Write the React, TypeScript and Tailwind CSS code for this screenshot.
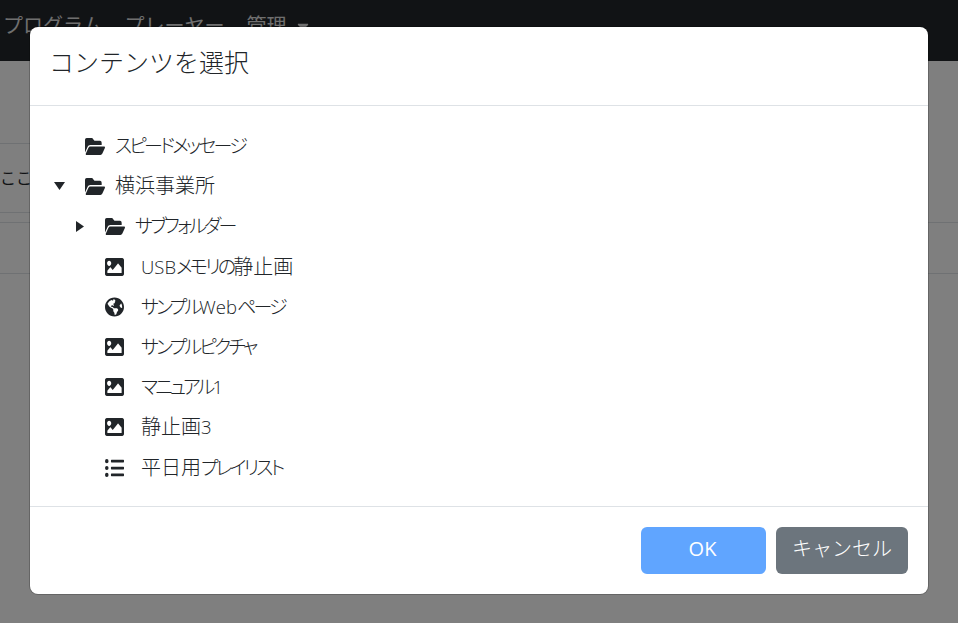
import { FaGlobeAmericas, FaListUl, FaCaretDown } from 'react-icons/fa';
import type { ReactNode } from 'react';

const jp = '[font-family:"Open_Sans","Noto_Sans_CJK_JP",sans-serif]';

// FA5 の形を縦に少し伸ばして使う
function FolderIcon() {
  return (
    <svg viewBox="0 64 576 384" preserveAspectRatio="none" className="h-[17px] w-[20px]" fill="currentColor">
      <path d="M572.694 292.093L500.27 416.248A63.997 63.997 0 0 1 444.989 448H45.025c-18.523 0-30.064-20.093-20.731-36.093l72.424-124.155A64 64 0 0 1 152 256h399.964c18.523 0 30.064 20.093 20.73 36.093zM152 224h328v-48c0-26.51-21.49-48-48-48H272l-64-64H48C21.49 64 0 85.49 0 112v278.046l69.077-118.418C86.214 242.25 117.989 224 152 224z" />
    </svg>
  );
}

function ImageIcon() {
  return (
    <svg viewBox="0 64 512 384" preserveAspectRatio="none" className="h-[18px] w-[19px]" fill="currentColor">
      <path d="M464 448H48c-26.51 0-48-21.49-48-48V112c0-26.51 21.49-48 48-48h416c26.51 0 48 21.49 48 48v288c0 26.51-21.49 48-48 48zM112 120c-30.928 0-56 25.072-56 56s25.072 56 56 56 56-25.072 56-56-25.072-56-56-56zM64 384h384V272l-87.515-87.515c-4.686-4.686-12.284-4.686-16.971 0L208 320l-55.515-55.515c-4.686-4.686-12.284-4.686-16.971 0L64 336v48z" />
    </svg>
  );
}

function CaretDown() {
  return (
    <svg viewBox="0 0 11 8" className="h-[8px] w-[11px] -translate-x-[1px]" fill="currentColor">
      <path d="M0 0h11L5.5 8z" />
    </svg>
  );
}

function CaretRight() {
  return (
    <svg viewBox="0 0 8 11" className="h-[11px] w-[8px]" fill="currentColor">
      <path d="M0 0l8 5.5L0 11z" />
    </svg>
  );
}

// かなは詰めて、漢字はそのままの幅で出す
function Label({ text }: { text: string }) {
  const parts = text.match(/[\u3040-\u30ff]+|[A-Za-z0-9]+|[^\u3040-\u30ffA-Za-z0-9]+/g) ?? [];
  return (
    <>
      {parts.map((part, i) => {
        if (/[\u3040-\u30ff]/.test(part)) {
          return (
            <span key={i} className="text-[19px] tracking-[-2.8px] [font-feature-settings:'palt']">
              {part}
            </span>
          );
        }
        if (/[A-Za-z0-9]/.test(part)) {
          return (
            <span key={i} className="text-[18.5px]">
              {part}
            </span>
          );
        }
        return <span key={i}>{part}</span>;
      })}
    </>
  );
}

type RowProps = {
  icon: ReactNode;
  label: string;
  depth?: number;
  caret?: 'down' | 'right';
  folder?: boolean;
};

function TreeRow({ icon, label, depth = 0, caret, folder }: RowProps) {
  return (
    <li className={`flex h-[40.2px] items-center ${depth === 1 ? 'pl-[20px]' : ''}`}>
      <span className="flex w-[35px] justify-center pr-[15px] text-[#212529]">
        {caret === 'down' && <CaretDown />}
        {caret === 'right' && <CaretRight />}
      </span>
      <span className="flex w-[20px] justify-start text-[20px] text-[#212529]">{icon}</span>
      <span className={`${folder ? 'ml-[10px]' : 'ml-[16px]'} text-[20px] leading-none font-light text-[#212529]`}>
        <Label text={label} />
      </span>
    </li>
  );
}

export default function App() {
  return (
    <div className={`relative h-[623px] w-[958px] overflow-hidden bg-white ${jp}`}>
      {/* 背景ページ */}
      <header className="flex h-[61px] items-center bg-[#23272b] pb-[10px] pl-[3px] text-[20px] text-[#dedede]">
        <span>プログラム</span>
        <span className="ml-[22px]">プレーヤー</span>
        <span className="ml-[22px]">管理</span>
        <FaCaretDown className="ml-[8px] text-[18px]" />
      </header>
      <div className="mt-[82px] h-[70px] w-[500px] border-y border-[#dee2e6] pt-[22px] text-[16px] text-[#212529]">ここに</div>
      <div className="mt-[9px] h-[52px] border-y border-[#dee2e6]" />

      <div className="absolute inset-0 bg-black/50" />

      {/* モーダル */}
      <div className="absolute left-[30px] top-[27px] flex h-[567px] w-[898px] flex-col rounded-[8px] bg-white shadow-[0_0_0_1px_rgba(0,0,0,0.2)]">
        <div className="flex h-[79px] shrink-0 items-center border-b border-[#dee2e6] px-[19px] pb-[6px] text-[25px] font-light text-[#212529]">
          コンテンツを選択
        </div>
        <ul className="flex-1 px-[20px] pt-[20px]">
          <TreeRow folder icon={<FolderIcon />} label="スピードメッセージ" />
          <TreeRow folder caret="down" icon={<FolderIcon />} label="横浜事業所" />
          <TreeRow folder depth={1} caret="right" icon={<FolderIcon />} label="サブフォルダー" />
          <TreeRow depth={1} icon={<ImageIcon />} label="USBメモリの静止画" />
          <TreeRow depth={1} icon={<FaGlobeAmericas className="h-[20px] w-[19px]" />} label="サンプルWebページ" />
          <TreeRow depth={1} icon={<ImageIcon />} label="サンプルピクチャ" />
          <TreeRow depth={1} icon={<ImageIcon />} label="マニュアル1" />
          <TreeRow depth={1} icon={<ImageIcon />} label="静止画3" />
          <TreeRow depth={1} icon={<FaListUl className="h-[22px] w-[19px]" preserveAspectRatio="none" />} label="平日用プレイリスト" />
        </ul>
        <div className="flex h-[88px] shrink-0 items-center justify-end gap-[10px] border-t border-[#dee2e6] px-[20px]">
          <button className="h-[47px] w-[125px] rounded-[6px] bg-[#60a5ff] pb-[3px] pr-[2px] text-[20px] text-white">OK</button>
          <button className="h-[47px] w-[132px] rounded-[6px] bg-[#6c757d] pb-[3px] text-[20px] font-light text-white">キャンセル</button>
        </div>
      </div>
    </div>
  );
}
